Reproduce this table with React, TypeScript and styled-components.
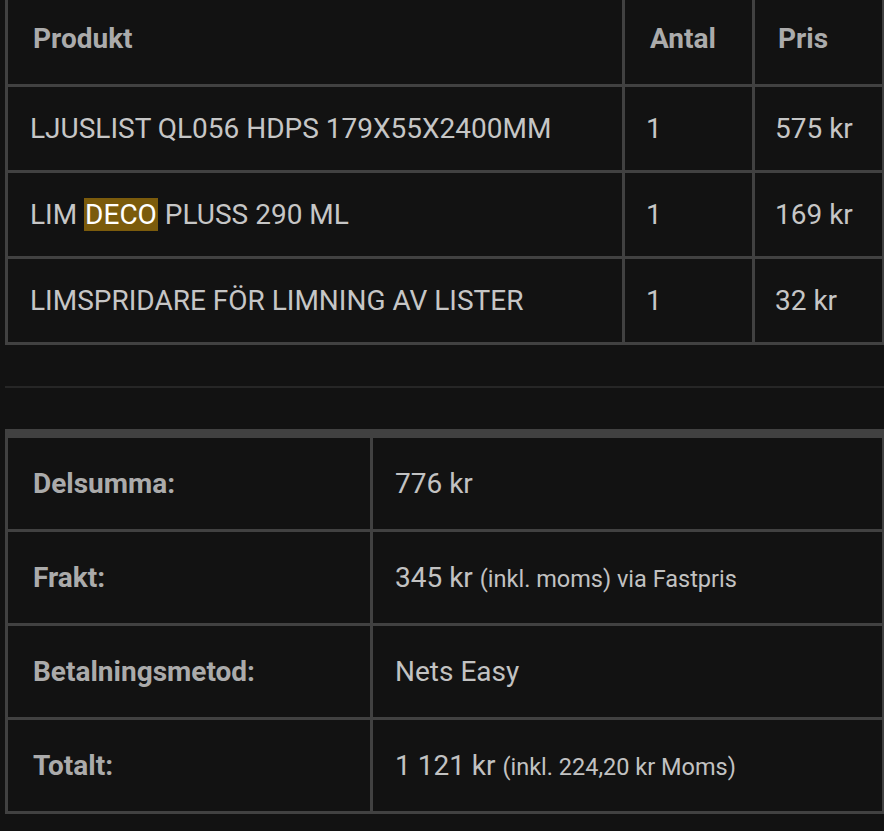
import React from "react";
import styled, { createGlobalStyle } from "styled-components";

const Global = createGlobalStyle`
  html, body { margin: 0; padding: 0; background: #121212; overflow: hidden; }
  body { font-family: Roboto, "Noto Sans", Arial, sans-serif; }
`;

const Page = styled.div`
  padding-left: 5px;
  width: 880px;
  display: flex;
  flex-direction: column;
`;

const ItemsGrid = styled.div`
  display: grid;
  grid-template-columns: 614px 127px 127px;
  grid-auto-rows: 83px;
  grid-template-rows: 84px;
  gap: 3px;
  padding: 0 3px 3px 3px;
  background: #414141;
`;

const Cell = styled.div<{ $head?: boolean; $pad?: number }>`
  background: #121212;
  display: flex;
  align-items: center;
  padding-left: ${(p) => (p.$pad ?? (p.$head ? 25 : 22))}px;
  padding-bottom: ${(p) => (p.$head ? "8px" : "0")};
  font-size: 28px;
  font-weight: ${(p) => (p.$head ? 700 : 400)};
  color: ${(p) => (p.$head ? "#ababab" : "#c6c6c6")};
  white-space: nowrap;
`;

const Mark = styled.mark`
  background: #7b5b0c;
  color: #ffffff;
  padding: 0 1px;
`;

const Separator = styled.div`
  height: 2px;
  background: #262626;
  margin: 41px 0 41px 0;
`;

const SummaryGrid = styled.div`
  display: grid;
  grid-template-columns: 362px 509px;
  grid-auto-rows: 91px;
  gap: 3px;
  padding: 9px 3px 3px 3px;
  background: #414141;
`;

const Label = styled.div`
  background: #121212;
  display: flex;
  align-items: center;
  padding-left: 25px;
  font-size: 28px;
  font-weight: 700;
  color: #ababab;
  white-space: nowrap;
`;

const Value = styled.div`
  background: #121212;
  display: flex;
  align-items: center;
  padding-left: 22px;
  font-size: 28px;
  color: #c2c2c2;
  white-space: nowrap;
`;

const Small = styled.small`
  font-size: 23.5px;
`;

const items = [
  { name: <span>LJUSLIST QL056 HDPS 179X55X2400MM</span>, qty: 1, price: "575 kr" },
  { name: <span>LIM <Mark>DECO</Mark> PLUSS 290 ML</span>, qty: 1, price: "169 kr" },
  { name: <span>LIMSPRIDARE FÖR LIMNING AV LISTER</span>, qty: 1, price: "32 kr" },
];

export default function App() {
  return (
    <>
      <Global />
      <Page>
        <ItemsGrid>
          <Cell $head>Produkt</Cell>
          <Cell $head>Antal</Cell>
          <Cell $head $pad={23}>Pris</Cell>
          {items.map((it, i) => (
            <React.Fragment key={i}>
              <Cell>{it.name}</Cell>
              <Cell $pad={21}>{it.qty}</Cell>
              <Cell $pad={20}>{it.price}</Cell>
            </React.Fragment>
          ))}
        </ItemsGrid>
        <Separator />
        <SummaryGrid>
          <Label>Delsumma:</Label>
          <Value>776 kr</Value>
          <Label>Frakt:</Label>
          <Value>
            <span>
              345 kr <Small>(inkl. moms) via Fastpris</Small>
            </span>
          </Value>
          <Label>Betalningsmetod:</Label>
          <Value>Nets Easy</Value>
          <Label>Totalt:</Label>
          <Value>
            <span>
              1 121 kr <Small>(inkl. 224,20 kr Moms)</Small>
            </span>
          </Value>
        </SummaryGrid>
      </Page>
    </>
  );
}
